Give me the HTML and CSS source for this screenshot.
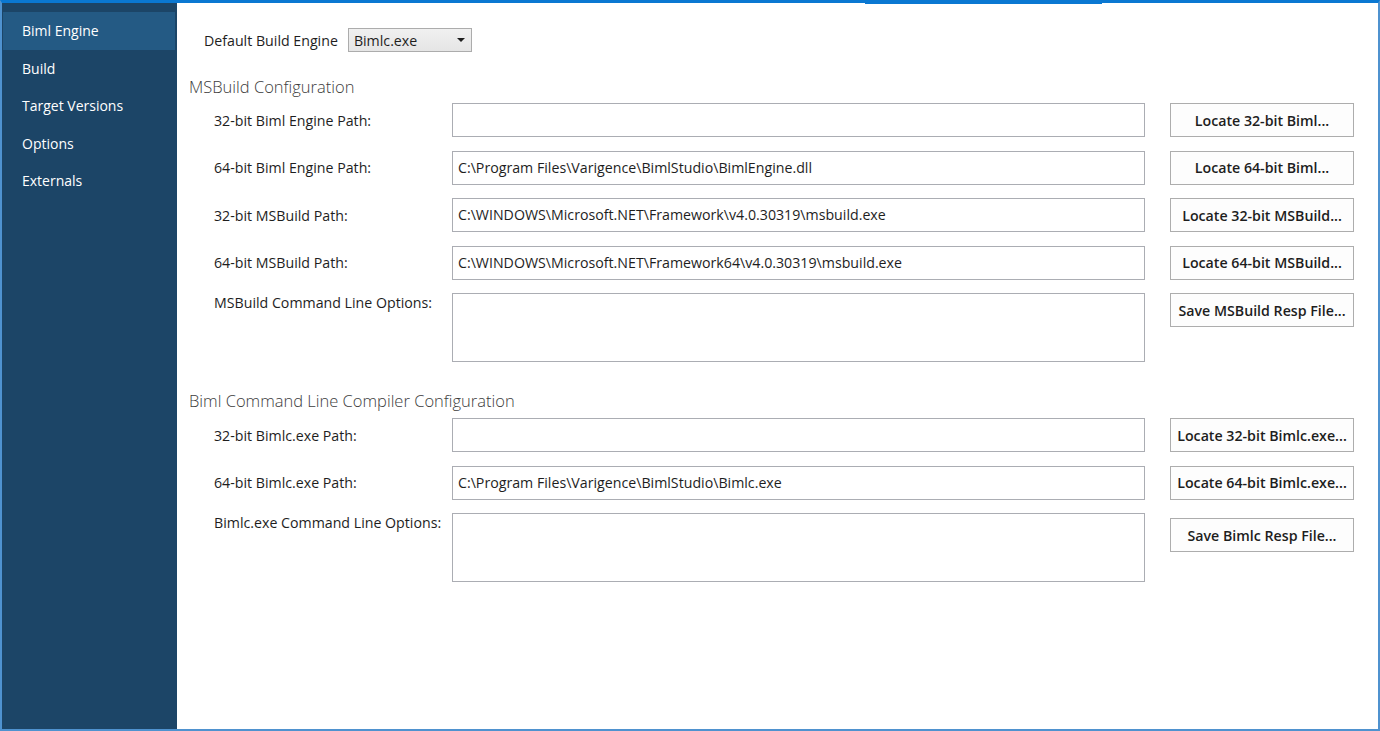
FILE: index.html
```html
<!DOCTYPE html>
<html>
<head>
<meta charset="utf-8">
<link rel="stylesheet" href="styles.css">
</head>
<body>
<div class="window">
  <div class="tab-marker"></div>
  <nav class="sidebar">
    <div class="nav-item active">Biml Engine</div>
    <div class="nav-item">Build</div>
    <div class="nav-item">Target Versions</div>
    <div class="nav-item">Options</div>
    <div class="nav-item">Externals</div>
  </nav>
  <main class="content">
    <div class="engine-row">
      <span class="label">Default Build Engine</span>
      <div class="select"><span>Bimlc.exe</span><span class="arrow"></span></div>
    </div>

    <section class="section first">
      <h2 class="heading">MSBuild Configuration</h2>
      <div class="grid">
        <span class="label">32-bit Biml Engine Path:</span>
        <div class="input"></div>
        <button class="btn">Locate 32-bit Biml...</button>

        <span class="label">64-bit Biml Engine Path:</span>
        <div class="input">C:\Program Files\Varigence\BimlStudio\BimlEngine.dll</div>
        <button class="btn">Locate 64-bit Biml...</button>

        <span class="label">32-bit MSBuild Path:</span>
        <div class="input">C:\WINDOWS\Microsoft.NET\Framework\v4.0.30319\msbuild.exe</div>
        <button class="btn">Locate 32-bit MSBuild...</button>

        <span class="label">64-bit MSBuild Path:</span>
        <div class="input">C:\WINDOWS\Microsoft.NET\Framework64\v4.0.30319\msbuild.exe</div>
        <button class="btn">Locate 64-bit MSBuild...</button>

        <span class="label label-top">MSBuild Command Line Options:</span>
        <div class="input textarea"></div>
        <button class="btn btn-top">Save MSBuild Resp File...</button>
      </div>
    </section>

    <section class="section second">
      <h2 class="heading">Biml Command Line Compiler Configuration</h2>
      <div class="grid">
        <span class="label">32-bit Bimlc.exe Path:</span>
        <div class="input"></div>
        <button class="btn">Locate 32-bit Bimlc.exe...</button>

        <span class="label">64-bit Bimlc.exe Path:</span>
        <div class="input">C:\Program Files\Varigence\BimlStudio\Bimlc.exe</div>
        <button class="btn">Locate 64-bit Bimlc.exe...</button>

        <span class="label label-top">Bimlc.exe Command Line Options:</span>
        <div class="input textarea"></div>
        <button class="btn btn-top btn-offset">Save Bimlc Resp File...</button>
      </div>
    </section>
  </main>
</div>
</body>
</html>
```

FILE: styles.css
```css
* { box-sizing: border-box; }
html, body { margin: 0; padding: 0; }
body {
  font-family: "Segoe UI", "Open Sans", "Noto Sans", sans-serif;
  font-size: 14.2px;
  color: #1e1e1e;
  background: #ffffff;
}
.window {
  position: relative;
  width: 1380px;
  height: 731px;
  display: flex;
  border-top: 3px solid #0a78d2;
  border-left: 2px solid #4f92cf;
  border-right: 2px solid #4f92cf;
  border-bottom: 2px solid #4f92cf;
  overflow: hidden;
}
.tab-marker {
  position: absolute;
  top: -3px;
  left: 863px;
  width: 237px;
  height: 4px;
  background: #0a78d2;
}
.sidebar {
  width: 175px;
  flex: none;
  background: #1c4567;
  padding: 9px 2px 0 1px;
}
.nav-item {
  height: 37.5px;
  line-height: 37.5px;
  padding-left: 19px;
  color: #ffffff;
  font-size: 14px;
}
.nav-item.active {
  background: #245a84;
}
.content {
  flex: 1;
  padding-top: 25px;
}
.engine-row {
  display: flex;
  align-items: center;
  padding-left: 27px;
  gap: 10px;
}
.select {
  width: 124px;
  height: 24px;
  border: 1px solid #acacac;
  background: linear-gradient(#f0f0f0, #e5e5e5);
  display: flex;
  align-items: center;
  justify-content: space-between;
  padding: 0 5px 0 5px;
}
.arrow {
  width: 0;
  height: 0;
  border-left: 4px solid transparent;
  border-right: 4px solid transparent;
  border-top: 4px solid #1e1e1e;
  margin-right: 1px;
}
.section { padding-left: 12px; }
.section.first { margin-top: 23px; }
.section.second { margin-top: 27px; }
.heading {
  margin: 0;
  font-weight: 300;
  font-size: 16.5px;
  line-height: 24px;
  color: #3c3c3c;
}
.first .heading { margin-bottom: 4px; }
.second .heading { margin-bottom: 5px; }
.grid {
  display: grid;
  margin-left: 25px;
  grid-template-columns: 238px 693px 209px;
  row-gap: 13.5px;
  align-items: center;
}
.label { white-space: nowrap; }
.label-top { align-self: start; padding-top: 0; }
.input {
  height: 34px;
  border: 1px solid #abadb3;
  background: #ffffff;
  padding: 0 5px;
  line-height: 32px;
  white-space: nowrap;
  overflow: hidden;
}
.textarea { height: 69px; }
.btn {
  justify-self: end;
  width: 184px;
  height: 34px;
  border: 1px solid #adadad;
  background: #fdfdfd;
  font-family: inherit;
  font-size: 14.2px;
  font-weight: 600;
  color: #1e1e1e;
  padding: 0;
}
.btn-top { align-self: start; }
.btn-offset { margin-top: 5px; }
```
